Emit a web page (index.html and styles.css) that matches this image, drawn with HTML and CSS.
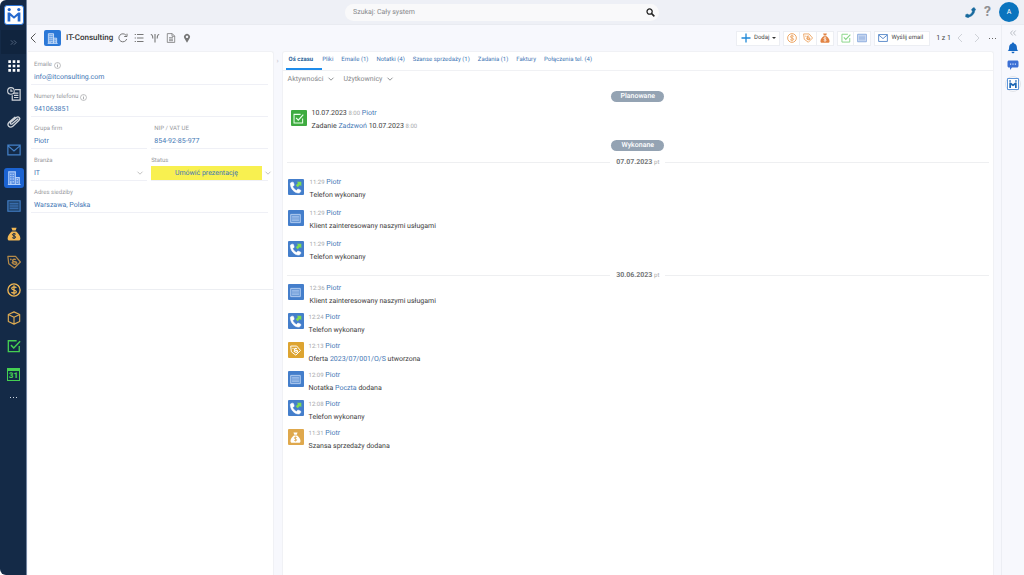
FILE: index.html
```html
<!DOCTYPE html>
<html lang="pl">
<head>
<meta charset="utf-8">
<title>IT-Consulting</title>
<link rel="stylesheet" href="styles.css">
</head>
<body>
<svg class="defs" aria-hidden="true">
  <symbol id="building" viewBox="0 0 16 16"><path d="M1 15.5h14.5M2 15V1h7.500v14M9.500 7.500H14V15" fill="none" stroke="currentColor" stroke-width="1.300"/><path d="M3.700 3h1.400v1.500H3.700zM6.400 3h1.400v1.500H6.400zM3.700 5.700h1.400v1.500H3.700zM6.400 5.700h1.400v1.500H6.400zM3.700 8.400h1.400v1.500H3.700zM6.400 8.400h1.400v1.500H6.400zM3.700 11.500h1.400V15H3.700zM6.400 11.500h1.400v1.500H6.400zM11 9.200h1.600v1.400H11zM11 12h1.600v1.400H11z" fill="currentColor"/><path d="M2.500 1.500H9V15H2.500zM9.500 8h4v7h-4z" fill="currentColor" opacity=".4"/></symbol>
  <symbol id="note" viewBox="0 0 16 16"><path d="M1 2h14v12H1z" fill="currentColor" fill-opacity=".3" stroke="currentColor" stroke-width="1.300"/><path d="M3 5h10M3 7h10M3 9h10M3 11h10" stroke="currentColor" stroke-width=".9"/></symbol>
  <symbol id="mail" viewBox="0 0 16 16"><path d="M1 2.500h14v11H1zM1 3l7 6 7-6" fill="none" stroke="currentColor" stroke-width="1.400"/></symbol>
  <symbol id="bag" viewBox="0 0 16 16"><path d="M5 .8h6L9.800 4H6.200zM5.500 5h5C13 7 15.300 10 15.300 13c0 2-1 2.500-2.500 2.500H3.200C1.700 15.500.7 15 .7 13c0-3 2.300-6 4.800-8z" fill="currentColor"/><path d="M10 8.200C8.500 7.200 6 7.500 6.200 9c.2 1.400 3.600.9 3.700 2.500.1 1.500-2.600 1.700-4 .6M8 6.800v6.700" fill="none" stroke="var(--hole)" stroke-width="1.100"/></symbol>
  <symbol id="tag" viewBox="0 0 16 16"><path d="M1 1.500h8.800L15.300 8 8.500 14.800 2 10z" fill="none" stroke="currentColor" stroke-width="1.400" stroke-linejoin="round"/><path d="M3.800 4.500l1.200 1M10 5.500C8.300 4 5.800 5.500 6.700 7.200c.8 1.300 3.600-.2 4.300 1.500.5 1.700-2 2.700-3.700 1.300L5.500 8.300" fill="none" stroke="currentColor" stroke-width="1.700"/></symbol>
  <symbol id="coin" viewBox="0 0 16 16"><circle cx="8" cy="8" r="7" fill="none" stroke="currentColor" stroke-width="1.500"/><path d="M10.800 5.400C9 3.900 5.300 4.200 5.400 6.200c.1 2.200 5.200 1.400 5.300 3.700.1 2-3.700 2.300-5.700.6M8 2.700v10.600" fill="none" stroke="currentColor" stroke-width="1.400"/></symbol>
  <symbol id="check" viewBox="0 0 16 16"><path d="M11 2H1.500v12.500H14V8" fill="none" stroke="currentColor" stroke-width="1.500"/><path d="M4.500 7l3.200 3.300L15 2.500" fill="none" stroke="currentColor" stroke-width="1.700"/></symbol>
  <symbol id="call" viewBox="0 0 16 16"><path d="M3.300 2.700l1.600-.4c.6-.1.900.2 1 .7l.6 2c.1.500 0 .8-.4 1.100l-1.100.9c.7 1.800 2 3.200 4.100 4.200l1-1.200c.3-.3.600-.4 1-.2l2.100.9c.5.2.7.600.5 1.100-.5 1.500-1.300 2.200-2.700 2.100C6.500 13.500 2.900 9.500 2.500 4.200c0-.8.2-1.300.8-1.500z" fill="#fff" stroke="#fff" stroke-width=".6"/><path d="M9.300 1.800h4.900v4.900l-1.500-1.400-2.400 2.400-2-2 2.400-2.400z" fill="#7fdb52"/></symbol>
  <symbol id="chev" viewBox="0 0 8 8"><path d="M1.500 2.700L4 5.200l2.500-2.500" fill="none" stroke="currentColor" stroke-width=".9"/></symbol>
  <symbol id="info" viewBox="0 0 8 8"><circle cx="4" cy="4" r="3.400" fill="none" stroke="currentColor" stroke-width=".7"/><path d="M4 2v.8M4 3.400V6" stroke="currentColor" stroke-width=".9"/></symbol>
  <symbol id="logo" viewBox="0 0 20 20"><path d="M2 7h2.800L10 11.500 15.200 7H18v11h-3.400v-7L10 14.800 5.400 11v7H2z" fill="currentColor"/><circle cx="4" cy="3.200" r="2" fill="currentColor"/><circle cx="16" cy="3.200" r="2" fill="currentColor"/></symbol>
</svg>
<div class="app">
  <nav class="rail" aria-label="Menu">
    <a class="logo" href="#" aria-label="Start"><svg><use href="#logo"/></svg></a>
    <button class="expand" aria-label="Rozwiń"><svg viewBox="0 0 8 8"><path d="M1 1.500L3.500 4 1 6.500M4.500 1.500L7 4 4.500 6.500" fill="none" stroke="currentColor" stroke-width=".8"/></svg></button>
    <a class="item white" href="#" aria-label="Aplikacje"><svg viewBox="0 0 16 16"><path d="M1.500 1.500h3v3h-3zM6.500 1.500h3v3h-3zM11.500 1.500h3v3h-3zM1.500 6.500h3v3h-3zM6.500 6.500h3v3h-3zM11.500 6.500h3v3h-3zM1.500 11.500h3v3h-3zM6.500 11.500h3v3h-3zM11.500 11.500h3v3h-3z" fill="currentColor"/></svg></a>
    <a class="item pale" href="#" aria-label="Historia"><svg viewBox="0 0 16 16"><circle cx="4.500" cy="4.500" r="3.800" fill="none" stroke="currentColor" stroke-width="1.200"/><path d="M4.500 2.500v2.300h2M9 3h6v12H6V9.500M8 7h5M8 9.500h5M8 12h5" fill="none" stroke="currentColor" stroke-width="1.400"/></svg></a>
    <a class="item pale" href="#" aria-label="Pliki"><svg viewBox="0 0 16 16"><path d="M12.500 4.500L6 10c-1.500 1.300-3-.5-1.500-1.900L10.500 3c3-2.200 5.500 1 3 3.200L7 12.500c-4 3.300-8-1-4.400-4.600L9 2.500" fill="none" stroke="currentColor" stroke-width="1.500" stroke-linecap="round"/></svg></a>
    <a class="item blue" href="#" aria-label="Emaile"><svg><use href="#mail"/></svg></a>
    <a class="item active" href="#" aria-label="Firmy"><svg><use href="#building"/></svg></a>
    <a class="item blue" href="#" aria-label="Notatki"><svg><use href="#note"/></svg></a>
    <a class="item gold" href="#" aria-label="Szanse"><svg><use href="#bag"/></svg></a>
    <a class="item bronze" href="#" aria-label="Oferty"><svg><use href="#tag"/></svg></a>
    <a class="item gold" href="#" aria-label="Faktury"><svg><use href="#coin"/></svg></a>
    <a class="item amber" href="#" aria-label="Produkty"><svg viewBox="0 0 16 16"><path d="M8 1l6.500 3v8L8 15l-6.500-3V4zM1.500 4L8 7.200 14.500 4M8 7.200V15" fill="none" stroke="currentColor" stroke-width="1.300" stroke-linejoin="round"/></svg></a>
    <a class="item green" href="#" aria-label="Zadania"><svg><use href="#check"/></svg></a>
    <a class="item green" href="#" aria-label="Kalendarz"><span class="cal">31</span></a>
    <button class="more" aria-label="Więcej"><i></i><i></i><i></i></button>
  </nav>

  <div class="page">
    <header class="top">
      <label class="search"><input type="text" placeholder="Szukaj: Cały system" aria-label="Szukaj"><svg viewBox="0 0 10 10"><circle cx="4" cy="4" r="2.900" fill="none" stroke="currentColor" stroke-width="1.400"/><path d="M6 6l3.300 3.300" stroke="currentColor" stroke-width="1.700"/></svg></label>
      <div class="user">
        <button class="phone" aria-label="Telefon"><svg viewBox="0 0 12 12"><path d="M8.300 1.300L10 .5l1.700 2.500-1 .8c-.3 3.400-2.600 6-6 7L3.500 11.700.6 10.700l.3-2.500 2-.5 1.500 1c1.900-.7 3.200-2.200 3.700-4.200L7 3z" fill="currentColor" stroke="currentColor" stroke-width=".5" stroke-linejoin="round"/></svg></button>
        <button class="help" aria-label="Pomoc">?</button>
        <button class="avatar">A</button>
      </div>
    </header>

    <div class="below">
      <div class="work">
        <div class="bar">
          <button class="back" aria-label="Wstecz"><svg viewBox="0 0 8 12"><path d="M6.500 1.500L2 6l4.500 4.500" fill="none" stroke="currentColor"/></svg></button>
          <span class="badge"><svg><use href="#building"/></svg></span>
          <h1>IT-Consulting</h1>
          <div class="tools">
            <button aria-label="Odśwież"><svg viewBox="0 0 10 10"><path d="M8.700 6A4 4 0 1 1 8 2.300M9 .7v2.800H6.200" fill="none" stroke="currentColor"/></svg></button>
            <button aria-label="Lista"><svg viewBox="0 0 10 10"><path d="M3 1.500h6.500M3 5h6.500M3 8.500h6.500M.7 1.500h1.200M.7 5h1.200M.7 8.500h1.200" stroke="currentColor" stroke-width="1.100"/></svg></button>
            <button aria-label="Struktura"><svg viewBox="0 0 10 10"><path d="M5 9.500V1M.8 1.500q2 0 2 4M9.200 1.500q-2 0-2 4" fill="none" stroke="currentColor" stroke-width="1.100"/></svg></button>
            <button aria-label="Dokument"><svg viewBox="0 0 10 10"><path d="M1.300.6h4.900l2.500 2.500v6.300H1.300zM6 .6v2.700h2.700M3 4.700h4M3 6.200h4M3 7.700h4" fill="none" stroke="currentColor" stroke-width=".8"/></svg></button>
            <button aria-label="Mapa"><svg viewBox="0 0 10 10"><path d="M5 9.800L2.500 5.600A3 3 0 1 1 7.500 5.600zM5 2.600a1.200 1.200 0 1 0 .01 0z" fill="currentColor" fill-rule="evenodd"/></svg></button>
          </div>
          <div class="actions">
            <button class="box add"><svg viewBox="0 0 10 10"><path d="M5 .5v9M.5 5h9" stroke="#1e88d8" stroke-width="1.300"/></svg>Dodaj<span class="caret"></span></button>
            <div class="set">
              <button class="box orange" aria-label="Faktura"><svg><use href="#coin"/></svg></button>
              <button class="box orange" aria-label="Oferta"><svg><use href="#tag"/></svg></button>
              <button class="box rust" aria-label="Szansa"><svg><use href="#bag"/></svg></button>
            </div>
            <div class="set">
              <button class="box lime" aria-label="Zadanie"><svg><use href="#check"/></svg></button>
              <button class="box steel" aria-label="Notatka"><svg><use href="#note"/></svg></button>
            </div>
            <button class="box email"><svg><use href="#mail"/></svg>Wyślij email</button>
            <span class="count">1 z 1</span>
            <button class="step" aria-label="Poprzedni"><svg viewBox="0 0 8 12"><path d="M6 2L2 6l4 4" fill="none" stroke="currentColor"/></svg></button>
            <button class="step" aria-label="Następny"><svg viewBox="0 0 8 12"><path d="M2 2l4 4-4 4" fill="none" stroke="currentColor"/></svg></button>
            <button class="dots" aria-label="Więcej"><i></i><i></i><i></i></button>
          </div>
        </div>

        <div class="columns">
          <section class="card">
            <div class="form">
              <div class="field wide"><span class="label">Emaile <svg><use href="#info"/></svg></span><a href="#">info@itconsulting.com</a></div>
              <div class="field wide"><span class="label">Numery telefonu <svg><use href="#info"/></svg></span><a href="#">941063851</a></div>
              <div class="field"><span class="label">Grupa firm</span><a href="#">Piotr</a></div>
              <div class="field"><span class="label">NIP / VAT UE</span><a href="#">854-92-85-977</a></div>
              <div class="field"><label class="label" for="branch">Branża</label><div class="pick"><select id="branch"><option>IT</option></select><svg><use href="#chev"/></svg></div></div>
              <div class="field status"><label class="label" for="status">Status</label><div class="pick"><select id="status"><option>Umówić prezentację</option></select><svg><use href="#chev"/></svg></div></div>
              <div class="field wide"><span class="label">Adres siedziby</span><a href="#">Warszawa, Polska</a></div>
            </div>
          </section>
          <button class="split" aria-label="Zwiń panel">›</button>
          <main class="main">
            <nav class="tabs">
              <a class="on" href="#">Oś czasu</a><a href="#">Pliki</a><a href="#">Emaile (1)</a><a href="#">Notatki (4)</a><a href="#">Szanse sprzedaży (1)</a><a href="#">Zadania (1)</a><a href="#">Faktury</a><a href="#">Połączenia tel. (4)</a>
            </nav>
            <div class="filters"><button>Aktywności<svg><use href="#chev"/></svg></button><button>Użytkownicy<svg><use href="#chev"/></svg></button></div>
            <h2 class="pill">Planowane</h2>
            <ul class="events planned">
              <li><span class="ico done"><svg><use href="#check"/></svg></span><div><p>10.07.2023 <time>8:00</time> <a href="#">Piotr</a></p><p>Zadanie <a href="#">Zadzwoń</a> 10.07.2023 <time>8:00</time></p></div></li>
            </ul>
            <h2 class="pill">Wykonane</h2>
            <h3 class="day lead"><span>07.07.2023 <small>pt</small></span></h3>
            <ul class="events first">
              <li><span class="ico tel"><svg><use href="#call"/></svg></span><div><p><time>11:29</time> <a href="#">Piotr</a></p><p>Telefon wykonany</p></div></li>
              <li><span class="ico memo"><svg><use href="#note"/></svg></span><div><p><time>11:29</time> <a href="#">Piotr</a></p><p>Klient zainteresowany naszymi usługami</p></div></li>
              <li><span class="ico tel"><svg><use href="#call"/></svg></span><div><p><time>11:29</time> <a href="#">Piotr</a></p><p>Telefon wykonany</p></div></li>
            </ul>
            <h3 class="day"><span>30.06.2023 <small>pt</small></span></h3>
            <ul class="events second">
              <li><span class="ico memo"><svg><use href="#note"/></svg></span><div><p><time>12:36</time> <a href="#">Piotr</a></p><p>Klient zainteresowany naszymi usługami</p></div></li>
              <li><span class="ico tel"><svg><use href="#call"/></svg></span><div><p><time>12:24</time> <a href="#">Piotr</a></p><p>Telefon wykonany</p></div></li>
              <li><span class="ico offer"><svg><use href="#tag"/></svg></span><div><p><time>12:13</time> <a href="#">Piotr</a></p><p>Oferta <a href="#">2023/07/001/O/S</a> utworzona</p></div></li>
              <li><span class="ico memo"><svg><use href="#note"/></svg></span><div><p><time>12:09</time> <a href="#">Piotr</a></p><p>Notatka <a href="#">Poczta</a> dodana</p></div></li>
              <li><span class="ico tel"><svg><use href="#call"/></svg></span><div><p><time>12:08</time> <a href="#">Piotr</a></p><p>Telefon wykonany</p></div></li>
              <li><span class="ico deal"><svg><use href="#bag"/></svg></span><div><p><time>11:31</time> <a href="#">Piotr</a></p><p>Szansa sprzedaży dodana</p></div></li>
            </ul>
          </main>
        </div>
      </div>

      <aside class="side">
        <button class="fold" aria-label="Zwiń"><svg viewBox="0 0 8 8"><path d="M3.700 1.500L1.500 4l2.200 2.500M6.700 1.500L4.500 4l2.200 2.500" fill="none" stroke="currentColor" stroke-width=".8"/></svg></button>
        <button aria-label="Powiadomienia"><svg viewBox="0 0 12 12"><path d="M6 .5c.7 0 1 .4 1 1 2 .5 2.800 2 2.900 3.900.1 2 .4 2.700 1.400 3.600H.7c1-.9 1.300-1.600 1.400-3.600C2.200 3.500 3 2 5 1.500c0-.6.3-1 1-1zM4.500 9.800h3c-.2 2-2.800 2-3 0z" fill="#1769c4"/></svg></button>
        <button aria-label="Czat"><svg viewBox="0 0 12 12"><path d="M2 1.500h8c.9 0 1.500.6 1.500 1.500v4c0 .9-.6 1.500-1.500 1.500H5L3 11V8.500H2C1.100 8.500.5 7.900.5 7V3c0-.9.600-1.500 1.500-1.500z" fill="#3b6fd4"/><path d="M3 4.500h1.200v1.200H3zM5.400 4.500h1.200v1.200H5.400zM7.800 4.500H9v1.200H7.800z" fill="#cfe0ff"/></svg></button>
        <button class="mini" aria-label="Livespace"><svg viewBox="0 0 12 12"><path d="M.5.500h11v11H.5z" fill="#fff" stroke="#5c95da"/><path d="M2.300 4.500h1.500L6 6.200l2.200-1.700h1.500V10H8V7L6 8.300 4 7v3H2.300zM2.300 2.200h1.500v1.500H2.300zM8.200 2.200h1.500v1.500H8.200z" fill="currentColor"/></svg></button>
      </aside>
    </div>
  </div>
</div>
</body>
</html>
```
FILE: styles.css
```css
* { box-sizing: border-box; }
body { margin: 0; background: #fff; color: #3c3c3c; font: 7px/12px Roboto, sans-serif; text-rendering: geometricPrecision; }
button, input, select { margin: 0; padding: 0; border: 0; background: none; color: inherit; font: inherit; text-rendering: inherit; }
a { color: #3f77b5; text-decoration: none; }
h1, h2, h3, p, ul { margin: 0; padding: 0; }
ul { list-style: none; }
svg { display: block; flex: none; }
.defs { position: absolute; width: 0; height: 0; }

.app { display: flex; min-height: 100vh; }
.page { flex: 1; display: flex; flex-direction: column; min-width: 0; }

.rail { --hole: #142a47; width: 27px; flex: none; display: flex; flex-direction: column; align-items: center; padding-left: 1px; background: #142a47; border-right: 1px solid #7385a0; border-radius: 6px 0 0 6px; }
.logo { display: flex; align-items: center; justify-content: center; width: 20px; height: 20px; margin: 5px 0; border: 1px solid #2f78d8; border-radius: 3px; background: #fff; color: #2469ce; }
.logo svg { width: 16px; height: 16px; }
.expand { display: flex; align-items: center; justify-content: center; align-self: stretch; height: 24px; margin-bottom: -2px; background: #10243e; color: #71829b; }
.expand svg { width: 7px; height: 7px; }
.item { display: flex; align-items: center; justify-content: center; width: 20px; height: 20px; margin: 4px 0; border-radius: 3px; }
.item svg { width: 14px; height: 14px; }
.white { color: #fff; }
.pale { color: #d0d4da; }
.blue { color: #4380c8; }
.active { background: #1b63d2; color: #b4d0fa; }
.gold { color: #f2b854; }
.bronze { color: #b58a48; }
.amber { color: #dcaa52; }
.green { color: #45cf52; }
.cal { width: 13px; height: 13px; border: 1px solid; border-top-width: 3px; font-size: 8px; font-weight: 900; line-height: 9px; text-align: center; }
.more, .dots { display: flex; align-items: center; justify-content: center; gap: 2px; height: 18px; }
.more i { width: 1px; height: 1px; background: #d0d8e4; }

.top { display: flex; align-items: center; justify-content: center; position: relative; height: 25px; background: #eef0f6; border-bottom: 1px solid #e9ebf1; }
.search { display: flex; align-items: center; width: 314px; height: 17px; margin-right: 47px; padding: 0 4px 0 8px; border-radius: 9px; background: #f9f9fa; }
.search input { flex: 1; min-width: 0; outline: 0; }
.search input::placeholder { color: #85878a; opacity: 1; }
.search svg { width: 9px; height: 9px; color: #222; }
.user { position: absolute; right: 5px; top: 2px; display: flex; align-items: center; gap: 8px; }
.phone { color: #186a9e; }
.phone svg { width: 11px; height: 11px; }
.help { color: #8f8f92; font-size: 14px; font-weight: 700; line-height: 20px; }
.avatar { width: 20px; height: 20px; border-radius: 50%; background: #0a74be; color: #fff; }

.below { flex: 1; display: flex; background: #f7f8fd; }
.work { flex: 1; min-width: 0; display: flex; flex-direction: column; padding-right: 7px; }
.bar { display: flex; align-items: center; height: 26px; color: #444; }
.back { margin: 0 7px 0 2px; color: #555; }
.back svg { width: 8px; height: 12px; }
.badge { display: flex; align-items: center; justify-content: center; width: 17px; height: 16px; border-radius: 2px; background: #2b78d7; color: #d3e4fb; }
.badge svg { width: 11px; height: 11px; }
h1 { margin: 0 5px; font-size: 8px; font-weight: 500; color: #333; }
.tools { display: flex; gap: 6px; color: #777; }
.tools svg { width: 10px; height: 10px; }
.actions { --hole: #fff; display: flex; align-items: center; gap: 3px; margin-left: auto; }
.set { display: flex; }
.box { display: flex; align-items: center; justify-content: center; gap: 3px; min-width: 17px; height: 15px; border: 1px solid #eceef3; background: #fff; }
.set .box + .box { border-left: 0; }
.box svg { width: 10px; height: 10px; }
.add, .email { font-size: 6px; }
.add { padding: 0 3px 0 4px; }
.caret { width: 4px; border: solid transparent; border-width: 2px 2px 0; border-top-color: #333; }
.orange { color: #eca15e; }
.rust { color: #e28343; }
.lime { color: #86d486; }
.steel { color: #7a9fda; }
.email { padding: 0 6px 0 3px; }
.email svg { color: #4d80c6; }
.count { margin: 0 2px 0 3px; }
.step { color: #cfd2d8; }
.step svg { width: 8px; height: 12px; }
.step + .step { margin-left: 6px; }
.dots { margin: 0 -2px 0 5px; }
.dots i { width: 1px; height: 1px; background: #666; }

.columns { flex: 1; display: flex; }
.card { flex: 0 0 25.400%; margin-left: 1px; background: #fff; border-top: 1px solid #f0f1f5; border-right: 1px solid #f0f1f5; border-radius: 0 3px 0 0; }
.form { display: grid; grid-template-columns: 1fr 1fr; align-content: start; column-gap: 4px; min-height: 238px; padding: 1px 5px 0 3px; border-bottom: 1px solid #eceef2; }
.field { display: flex; flex-direction: column; height: 32px; padding: 7px 3px 0; border-bottom: 1px solid #eff0f6; line-height: 14px; color: #3f77b5; }
.wide { grid-column: 1 / -1; }
.label { display: flex; align-items: center; gap: 2px; height: 10px; color: #97999d; font-size: 6px; line-height: 10px; }
.label svg { width: 7px; height: 7px; }
.pick { display: flex; align-items: center; }
.pick select { flex: 1; appearance: none; height: 14px; }
.pick svg { width: 8px; height: 8px; color: #bbb; }
.status { padding: 7px 0 0; }
.status .pick { gap: 2px; margin-right: -4px; }
.status select { background: #f8f050; text-align-last: center; }
.split { width: 8px; align-self: flex-start; height: 20px; color: #c4c7ce; }

.main { flex: 1; min-width: 0; padding-bottom: 12px; background: #fff; border: 1px solid #f0f1f5; border-bottom: 0; border-radius: 3px 3px 0 0; }
.tabs { display: flex; gap: 8px; padding-left: 3px; border-bottom: 1px solid #f0f1f4; font-size: 6px; }
.tabs a { height: 18px; line-height: 16px; white-space: nowrap; }
.tabs .on { margin-right: -8px; padding: 0 9px 0 3px; border-bottom: 2px solid #1e8ceb; color: #2a5f98; font-weight: 700; }
.filters { display: flex; gap: 8px; padding: 2px 5px; color: #85878a; }
.filters button { display: flex; align-items: center; gap: 4px; }
.filters svg { width: 8px; height: 8px; }
.pill { width: 53px; height: 11px; margin: 4px auto 0; border-radius: 6px; background: #94a3b3; color: #fff; font-size: 7px; font-weight: 500; line-height: 11px; text-align: center; }
.day { display: flex; align-items: center; gap: 6px; height: 12px; margin: 0 4px; color: #737578; font-size: 7px; }
.lead { margin-top: 5px; }
.day::before, .day::after { content: ""; flex: 1; height: 1px; background: #eeeff1; }
.day small { color: #aaa; font-size: 6px; font-weight: 400; }
.events { --hole: #dfa84c; padding-left: 5px; }
.events li { display: flex; gap: 5px; height: 29px; }
.events time { color: #a9abad; font-size: 6px; }
.events p { line-height: 13px; }
.ico { display: flex; align-items: center; justify-content: center; flex: none; width: 16px; height: 16px; border-radius: 1px; color: #b9d2f3; }
.ico svg { width: 11px; height: 11px; }
.planned { padding: 5px 0 0 8px; }
.planned .ico, .first .ico { margin-top: 3px; }
.first { padding-top: 8px; }
.first li { height: 31px; }
.first li, .second li:first-child { gap: 6px; }
.second { padding-top: 1px; }
.second .ico { margin-top: 2px; }
.done { background: #3eab40; color: #eaffea; }
.tel, .memo { background: #447ecb; }
.tel svg { width: 15px; height: 15px; }
.offer { background: #dda431; color: #fff; }
.deal { background: #dfa84c; color: #fff; }

.side { width: 23px; display: flex; flex-direction: column; align-items: center; gap: 5px; padding-top: 4px; border-left: 1px solid #eceef4; }
.side svg { width: 12px; height: 12px; }
.side .fold { color: #aaaeb6; }
.side .fold svg { width: 8px; height: 8px; }
.side .mini { display: flex; align-items: center; justify-content: center; width: 16px; height: 16px; border: 1px solid #e2e5ea; border-radius: 50%; color: #1f68b4; }
.side .mini svg { width: 12px; height: 12px; }
```
